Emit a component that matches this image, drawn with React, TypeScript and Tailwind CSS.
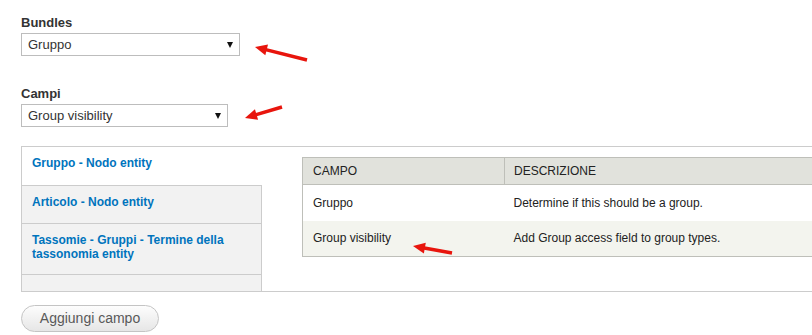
import React from 'react';

interface SelectBoxProps {
  value: string;
  width: string;
}

const SelectBox: React.FC<SelectBoxProps> = ({ value, width }) => (
  <div
    className={`mt-[1px] flex h-[23px] items-center justify-between border border-[#bdbdbd] bg-white pl-[6px] pr-[6px] text-[13px] text-[#333] ${width}`}
  >
    <span>{value}</span>
    <svg width="6" height="6" viewBox="0 0 6 6" className="mt-[1px]">
      <polygon points="0,0 6,0 3,6" fill="#111" />
    </svg>
  </div>
);

type Arrow = { tip: [number, number]; tail: [number, number] };

const arrows: Arrow[] = [
  { tip: [255, 47], tail: [307, 60] },
  { tip: [245, 118], tail: [282, 107] },
  { tip: [413, 246], tail: [452, 253] },
];

const RedArrow: React.FC<Arrow> = ({ tip, tail }) => {
  const dx = tail[0] - tip[0];
  const dy = tail[1] - tip[1];
  const len = Math.sqrt(dx * dx + dy * dy);
  const ux = dx / len;
  const uy = dy / len;
  const headLen = 12;
  const headW = 5.5;
  const bx = tip[0] + ux * headLen;
  const by = tip[1] + uy * headLen;
  const p1 = `${bx - uy * headW},${by + ux * headW}`;
  const p2 = `${bx + uy * headW},${by - ux * headW}`;
  return (
    <g>
      <line
        x1={tail[0]}
        y1={tail[1]}
        x2={bx - ux * 2}
        y2={by - uy * 2}
        stroke="#e8150d"
        strokeWidth="3.5"
      />
      <polygon points={`${tip[0]},${tip[1]} ${p1} ${p2}`} fill="#e8150d" />
    </g>
  );
};

const tabs = [
  { label: 'Gruppo - Nodo entity', active: true, h: 'h-[39px]' },
  { label: 'Articolo - Nodo entity', active: false, h: 'h-[38px]' },
  { label: 'Tassomie - Gruppi - Termine della tassonomia entity', active: false, h: 'h-[51px]' },
];

const rows = [
  { field: 'Gruppo', desc: 'Determine if this should be a group.', bg: 'bg-white' },
  { field: 'Group visibility', desc: 'Add Group access field to group types.', bg: 'bg-[#f3f4ee]' },
];

const App: React.FC = () => {
  return (
    <div className="relative h-[335px] w-[812px] overflow-hidden bg-white pl-[21px] font-['Liberation_Sans',Arial,sans-serif] text-[#333]">
      <div className="pt-[14px]">
        <label className="block text-[13px] font-bold leading-[18px]">Bundles</label>
        <SelectBox value="Gruppo" width="w-[219px]" />
      </div>

      <div className="mt-[29px]">
        <label className="block text-[13px] font-bold leading-[18px]">Campi</label>
        <SelectBox value="Group visibility" width="w-[207px]" />
      </div>

      <div className="mt-[19px] flex h-[146px] w-[860px] border-y border-l border-[#ccc]">
        <ul className="flex w-[240px] shrink-0 flex-col">
          {tabs.map((t) => (
            <li
              key={t.label}
              className={`shrink-0 border-b border-[#ccc] pl-[10px] pr-[20px] pt-[10px] text-[12px] font-bold leading-[13.5px] text-[#0074bd] ${t.h} ${
                t.active ? 'bg-white' : 'border-r bg-[#f2f2f2]'
              }`}
            >
              {t.label}
            </li>
          ))}
          <li className="flex-1 border-r border-[#ccc] bg-[#f2f2f2]" />
        </ul>

        <div className="min-w-0 flex-1 pl-[40px] pt-[10px]">
          <table className="w-[560px] border-collapse border border-[#bebfb9] text-[12px] text-[#222]">
            <thead>
              <tr className="h-[27px] border-b border-[#bebfb9] bg-[#e1e2dc] text-left">
                <th className="w-[202px] border-r border-[#bebfb9] pl-[10px] font-normal">CAMPO</th>
                <th className="pl-[9px] font-normal">DESCRIZIONE</th>
              </tr>
            </thead>
            <tbody>
              {rows.map((r) => (
                <tr key={r.field} className={`h-[36px] ${r.bg}`}>
                  <td className="pl-[10px]">{r.field}</td>
                  <td className="pl-[9px]">{r.desc}</td>
                </tr>
              ))}
            </tbody>
          </table>
        </div>
      </div>

      <button className="mt-[13px] flex h-[27px] w-[138px] items-center justify-center rounded-[14px] border border-[#c4c4c4] bg-gradient-to-b from-[#fdfdfd] to-[#e6e6e6] text-[14px] text-[#595959]">
        Aggiungi campo
      </button>

      <svg className="pointer-events-none absolute left-0 top-0" width="812" height="335">
        {arrows.map((a, i) => (
          <RedArrow key={i} tip={a.tip} tail={a.tail} />
        ))}
      </svg>
    </div>
  );
};

export default App;
